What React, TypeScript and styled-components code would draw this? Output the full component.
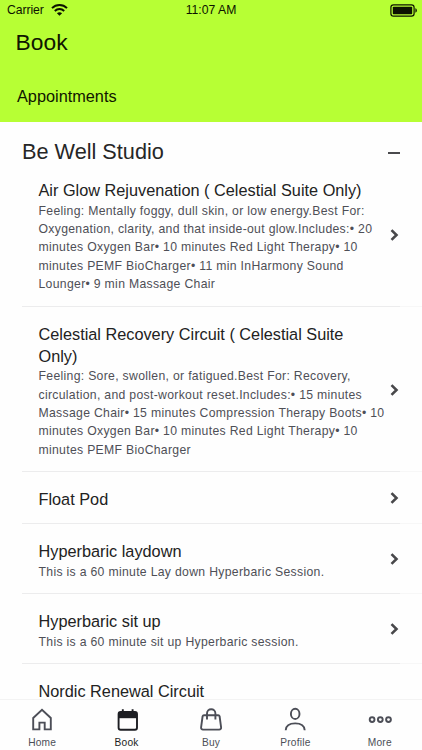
import React from 'react';
import styled, { createGlobalStyle } from 'styled-components';

const GlobalStyle = createGlobalStyle`
  * { box-sizing: border-box; }
  html, body { margin: 0; padding: 0; overflow: hidden; background: #fefefe; }
  body { font-family: "Liberation Sans", Arial, sans-serif; }
`;

const Screen = styled.div`
  display: flex;
  flex-direction: column;
  width: 422px;
  height: 750px;
  overflow: hidden;
  background: #fefefe;
`;

const Header = styled.header`
  flex: none;
  height: 122px;
  background: #b7ff34;
  color: #101600;
`;

const StatusBar = styled.div`
  display: grid;
  grid-template-columns: 1fr auto 1fr;
  align-items: center;
  height: 20px;
  padding: 0 4px 0 7px;
  font-size: 12.2px;
  color: #0c1200;
`;

const Carrier = styled.div`
  display: flex;
  align-items: center;
  gap: 7px;
  letter-spacing: -0.08px;
`;

const Clock = styled.div`
  padding-right: 3px;
`;

const BatteryIcon = styled.svg`
  justify-self: end;
`;

const PageTitle = styled.h1`
  margin: 8px 0 0 15.6px;
  font-size: 22.8px;
  font-weight: 400;
  line-height: 28px;
`;

const TabLabel = styled.div`
  margin: 30px 0 0 17px;
  font-size: 16.3px;
  line-height: 20px;
`;

const Content = styled.main`
  flex: 1;
  min-height: 0;
  overflow: hidden;
`;

const SectionHeader = styled.div`
  display: flex;
  align-items: center;
  justify-content: space-between;
  height: 41.5px;
  padding: 17px 22px 0 22px;
`;

const SectionTitle = styled.h2`
  margin: 0;
  font-size: 21.7px;
  font-weight: 400;
  line-height: 25px;
  color: #262626;
`;

const CollapseMark = styled.div`
  width: 12px;
  height: 1.5px;
  margin-top: 3px;
  background: #4a4a4d;
`;

const Row = styled.div<{ $minHeight?: number }>`
  display: flex;
  align-items: center;
  justify-content: space-between;
  min-height: ${(p) => p.$minHeight ?? 0}px;
  margin-left: 22px;
  padding: 14.7px 23px 14.7px 16.5px;
  background: linear-gradient(to right, #ececed 378px, #f7f7f7 378px) bottom / 100% 1px no-repeat;
`;

const RowBody = styled.div`
  align-self: flex-start;
  margin: 1.2px 0 -1.2px;
`;

const RowTitle = styled.div`
  font-size: 16.3px;
  line-height: 22.4px;
  white-space: pre-line;
  color: #222;
`;

const RowText = styled.div`
  font-size: 12.23px;
  line-height: 18.3px;
  letter-spacing: 0.31px;
  white-space: pre;
  color: #4e4f56;
`;

const Chevron = styled.svg`
  flex: none;
`;

const NavBar = styled.nav`
  flex: none;
  display: grid;
  grid-template-columns: repeat(5, 1fr);
  height: 51px;
  border-top: 1px solid #f3f3f3;
  background: #fefefe;
`;

const NavItem = styled.div<{ $active?: boolean }>`
  display: flex;
  flex-direction: column;
  align-items: center;
  gap: 3px;
  padding-top: 7px;
  font-size: 10.2px;
  line-height: 14px;
  letter-spacing: 0.22px;
  color: ${(p) => (p.$active ? '#1d1e23' : '#4c4e57')};
`;

const NavIcon = styled.svg`
  display: block;
  width: 26px;
  height: 26px;
  fill: none;
  stroke: currentColor;
  stroke-width: 1.9;
`;

const services = [
  {
    title: 'Air Glow Rejuvenation ( Celestial Suite Only)',
    text: 'Feeling: Mentally foggy, dull skin, or low energy.Best For:\nOxygenation, clarity, and that inside-out glow.Includes:• 20\nminutes Oxygen Bar• 10 minutes Red Light Therapy• 10\nminutes PEMF BioCharger• 11 min InHarmony Sound\nLounger• 9 min Massage Chair',
  },
  {
    title: 'Celestial Recovery Circuit ( Celestial Suite\nOnly)',
    text: 'Feeling: Sore, swollen, or fatigued.Best For: Recovery,\ncirculation, and post-workout reset.Includes:• 15 minutes\nMassage Chair• 15 minutes Compression Therapy Boots• 10\nminutes Oxygen Bar• 10 minutes Red Light Therapy• 10\nminutes PEMF BioCharger',
  },
  { title: 'Float Pod' },
  { title: 'Hyperbaric laydown', text: 'This is a 60 minute Lay down Hyperbaric Session.' },
  { title: 'Hyperbaric sit up', text: 'This is a 60 minute sit up Hyperbaric session.' },
  { title: 'Nordic Renewal Circuit', minHeight: 143 },
];

const navItems = [
  {
    label: 'Home',
    icon: <path d="M4.2 11 13 2.9l8.8 8.1v11.4h-6.1v-6.8h-5.3v6.8H4.2z" />,
  },
  {
    label: 'Book',
    active: true,
    icon: (
      <>
        <rect x="4.6" y="5" width="18.4" height="17.8" rx="2" />
        <path d="M4.6 5h18.4v6.2H4.6z" fill="currentColor" stroke="none" />
        <path d="M8.8 2.2v3M18.6 2.2v3" />
      </>
    ),
  },
  {
    label: 'Buy',
    icon: (
      <>
        <path d="M6 8.2h14.2c.7 0 1.2.4 1.4 1.1l1.5 11c.2 1.3-.6 2.3-1.9 2.3H5c-1.3 0-2.1-1-1.9-2.3l1.5-11c.2-.7.7-1.1 1.4-1.1z" />
        <path d="M9 12.6V6.4c0-2.4 1.8-4.2 4.2-4.2s4.2 1.8 4.2 4.2v6.2" />
      </>
    ),
  },
  {
    label: 'Profile',
    icon: (
      <>
        <ellipse cx="13.2" cy="6.9" rx="4.3" ry="5.1" />
        <path d="M3.7 23.2c.3-4.3 4-6.8 9.5-6.8s9.2 2.5 9.5 6.8" />
      </>
    ),
  },
  {
    label: 'More',
    icon: (
      <>
        <circle cx="5.1" cy="12.6" r="2.4" />
        <circle cx="13.3" cy="12.6" r="2.4" />
        <circle cx="21.5" cy="12.6" r="2.4" />
      </>
    ),
  },
];

export default function App() {
  return (
    <>
      <GlobalStyle />
      <Screen>
        <Header>
          <StatusBar>
            <Carrier>
              Carrier
              <svg width="17" height="12" viewBox="0 0 17 12" fill="none" stroke="currentColor" strokeWidth="2">
                <path d="M1 4.1c4.2-4.1 10.8-4.1 15 0M3.8 6.9c2.7-2.5 6.7-2.5 9.4 0" />
                <path d="M8.5 11.8 5.9 9.2c1.5-1.4 3.7-1.4 5.2 0z" fill="currentColor" stroke="none" />
              </svg>
            </Carrier>
            <Clock>11:07 AM</Clock>
            <BatteryIcon width="28" height="13" viewBox="0 0 28 13">
              <rect x="0.9" y="0.9" width="23.2" height="11.2" rx="2.6" fill="none" stroke="currentColor" strokeWidth="1.2" />
              <rect x="2.8" y="2.8" width="19.4" height="7.4" rx="0.8" fill="currentColor" />
              <path d="M25.4 4.3c2 .7 2 3.7 0 4.4z" fill="currentColor" />
            </BatteryIcon>
          </StatusBar>
          <PageTitle>Book</PageTitle>
          <TabLabel>Appointments</TabLabel>
        </Header>
        <Content>
          <SectionHeader>
            <SectionTitle>Be Well Studio</SectionTitle>
            <CollapseMark />
          </SectionHeader>
          {services.map((s) => (
            <Row key={s.title} $minHeight={s.minHeight}>
              <RowBody>
                <RowTitle>{s.title}</RowTitle>
                {s.text && <RowText>{s.text}</RowText>}
              </RowBody>
              <Chevron width="9" height="12" viewBox="0 0 9 12" fill="none" stroke="#48484b" strokeWidth="2.6">
                <path d="M1.5 1.1 6.5 6l-5 4.9" />
              </Chevron>
            </Row>
          ))}
        </Content>
        <NavBar>
          {navItems.map((n) => (
            <NavItem key={n.label} $active={n.active}>
              <NavIcon viewBox="0 0 26 26">{n.icon}</NavIcon>
              {n.label}
            </NavItem>
          ))}
        </NavBar>
      </Screen>
    </>
  );
}
